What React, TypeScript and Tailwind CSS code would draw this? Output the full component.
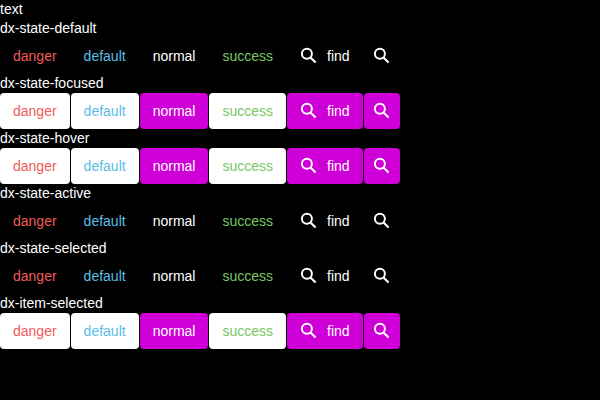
import React from "react";

const states = [
  { name: "dx-state-default", filled: false },
  { name: "dx-state-focused", filled: true },
  { name: "dx-state-hover", filled: true },
  { name: "dx-state-active", filled: false },
  { name: "dx-state-selected", filled: false },
  { name: "dx-item-selected", filled: true },
];

function SearchIcon() {
  return (
    <svg className="size-[18px] shrink-0" viewBox="0 0 18 18" fill="none" stroke="#fff">
      <circle cx="6.9" cy="6.8" r="5" strokeWidth="2" />
      <path d="M10.4 10.4L15.6 15.6" strokeWidth="2.1" />
    </svg>
  );
}

function Row({ filled }: { filled: boolean }) {
  const base = "flex h-9 items-center justify-center rounded-[4px] ";
  const light = base + "px-[13px] " + (filled ? "bg-white " : "");
  const accent = base + (filled ? "bg-[#cf00d7] " : "");
  return (
    <div className="flex h-9 gap-px text-white">
      <div className={light + "text-[#f05b5b]"}>danger</div>
      <div className={light + "text-[#5bbde6]"}>default</div>
      <div className={accent + "px-[13px]"}>normal</div>
      <div className={light + "text-[#77c763]"}>success</div>
      <div className={accent + "gap-[9px] px-[13px]"}>
        <SearchIcon />
        <span>find</span>
      </div>
      <div className={accent + "w-9"}>
        <SearchIcon />
      </div>
    </div>
  );
}

export default function App() {
  return (
    <main className="h-[400px] w-[600px] overflow-hidden bg-black font-['Liberation_Sans',Arial,sans-serif] text-[14px] leading-[19px] text-white">
      <div>text</div>
      {states.map((s) => (
        <section key={s.name}>
          <div>{s.name}</div>
          <Row filled={s.filled} />
        </section>
      ))}
    </main>
  );
}
